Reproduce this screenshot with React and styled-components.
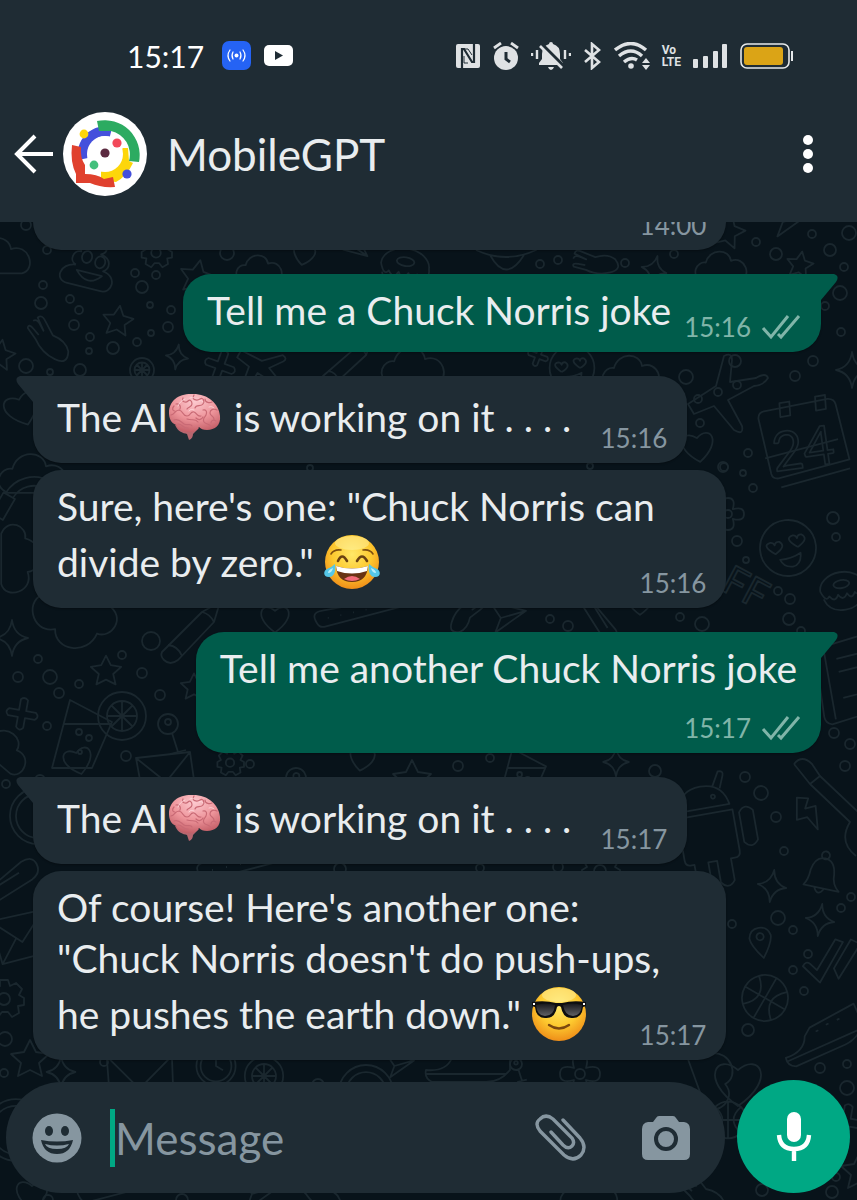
import React from 'react'
import styled, { createGlobalStyle } from 'styled-components'

const GlobalStyle = createGlobalStyle`
  * {
    box-sizing: border-box;
  }
  body {
    margin: 0;
    background: #08131a;
    font-family: Lato, "Open Sans", sans-serif;
  }
`

const messages = [
  { id: 1, side: 'in', time: '14:00', wide: true, stacked: true, text: [] },
  { id: 2, side: 'out', time: '15:16', tail: true, gap: 24, text: ['Tell me a Chuck Norris joke'] },
  { id: 3, side: 'in', time: '15:16', tail: true, gap: 24, text: ['The AI', 'brain', ' is working on it . . . .'] },
  { id: 4, side: 'in', time: '15:16', gap: 7, text: ['Sure, here\'s one: "Chuck Norris can divide by zero." ', 'joy'] },
  { id: 5, side: 'out', time: '15:17', tail: true, gap: 24, stacked: true, text: ['Tell me another Chuck Norris joke'] },
  { id: 6, side: 'in', time: '15:17', tail: true, gap: 24, text: ['The AI', 'brain', ' is working on it . . . .'] },
  { id: 7, side: 'in', time: '15:17', gap: 7, text: ['Of course! Here\'s another one:\n"Chuck Norris doesn\'t do push-ups, he pushes the earth down." ', 'cool'] },
]

const emojiNames = ['brain', 'joy', 'cool']

// wallpaper shapes, each drawn round 0,0 and about 40 units wide
const shapes = {
  star: 'M0-18 6-6 19-4 9 5 12 18 0 12-12 18-9 5-19-4-6-6Z',
  sparkle: 'M0-18Q2-3 16 0Q2 3 0 18Q-2 3-16 0Q-2-3 0-18Z',
  heart: 'M0 16C-26-2-14-20 0-8C14-20 26-2 0 16Z',
  cloud: 'M-22 14C-36 8-28-8-18-6C-14-22 8-22 10-8C26-14 34 10 20 14Z',
  gear: 'M-4-18h8l2 6 6-3 6 6-3 6 5 3v7l-6 1 1 7-7 4-4-5h-6l-4 5-7-4 1-7-6-1v-7l5-3-3-6 6-6 6 3ZM-6 1a6 6 0 1 0 12 0a6 6 0 1 0-12 0',
  hand: 'M-20-16q4-3 8 3l4 5-8-12q4-4 8 2l10 13Q16-2 20 8q2 14-12 10Q-6 14-14 2L-24-8q0-5 6 0l6 5',
  poop: 'M-14 2c-8-2-6-14 2-14-4-14 8-12 12-20 12 4 16 14 8 18 12 2 12 12 6 16 16 2 14 20 2 20h-34c-14 0-12-18 4-20M-10-8a5 6 0 1 0 10 0a5 6 0 1 0-10 0M4-6a5 6 0 1 0 10 0a5 6 0 1 0-10 0M-12 7Q2 22 14 7Z',
  donut: 'M-22 0a22 16 0 1 1 44 0q2 8-4 8t-6-2q-4 8-8 0-5 8-9 0-4 8-9 0-4 6-8-6ZM-8-4a8 4 0 1 0 16 0a8 4 0 1 0-16 0M-20 8q4 14 20 14t20-14',
  ufo: 'M-30 0Q0-14 30 0Q0 14-30 0M-16 5Q0 34 18 5',
  plane: 'M-20-18 20-8-14 16-8 0ZM-8 0 20-8',
  jet: 'M4-32q8-4 8 4l-2 22 26-4q10-6 12 0-4 7-14 8l-26 14 14 26q2 10-8 4L-6 18l-20 8-6-10 28-18Z',
  calendar: 'M-38-24q0-6 6-7l64-8q7 0 8 6l10 56-72 14q-6 0-7-5ZM-34 16 40 2M-16-38l10-1v14l-10 1ZM20-42l10-1v14l-10 1ZM-20 46 50 32',
  face: 'M-28 0a28 28 0 1 0 56 0a28 28 0 1 0-56 0M-13 5q-14-10-4-12 3 0 4 3 1-4 5-3 7 5-5 12M10 0q-14-10-4-12 3 0 4 3 1-4 5-3 7 5-5 12M-9 11q12 0 21-5 0 12-9 13-9 0-12-8Z',
  pencil: 'M-28 12 12-28 30-38 24-18-12 20q-8 6-14 0-4-4-2-8ZM12-28Q20-26 24-18M-22 5Q-12 6-8 16',
  glass: 'M-22-24-40 44H0L20-2ZM-28 0H20M-16 8a3 3 0 1 0 6 0a3 3 0 1 0-6 0M-6 14a3 3 0 1 0 6 0a3 3 0 1 0-6 0M-14 28a2 2 0 1 0 4 0a2 2 0 1 0-4 0',
  citrus: 'M-24 0a24 24 0 1 0 48 0a24 24 0 1 0-48 0M-15 0a15 15 0 1 0 30 0a15 15 0 1 0-30 0M0-15V15M-15 0H15M-10-10 10 10M10-10-10 10',
  plus: 'M-4-16q4-4 8 0v12h11q5 4 0 8H4v11q-4 5-8 0V4h-11q-5-4 0-8h11Z',
  bell: 'M-16 14Q-12 8-12-2Q-10-16 0-16Q10-16 12-2Q12 8 20 14ZM-5 14q5 10 10 0M-4-19a4 4 0 1 0 8 0a4 4 0 1 0-8 0',
  android: 'M-26-24Q-22-46 0-46Q22-46 26-24ZM-28-18H28V24q0 6-6 6h-4v22q-7 9-14 0V30H-5v22q-7 9-14 0V30h-4q-5 0-5-6ZM34-14q7-9 14 0v30q-7 9-14 0ZM12-44l8-14q6 0 4 5l-5 12M9-34a2 2 0 1 0 4 0a2 2 0 1 0-4 0',
  bolt: 'M-6-18 6-14 0-4 12-4 8 22 0 6-12 6Z',
  pin: 'M0 18Q-12 2-12-6Q-10-16 0-16Q10-16 12-6Q12 2 0 18ZM-4-6a4 4 0 1 0 8 0a4 4 0 1 0-8 0',
  ball: 'M-23 0a23 23 0 1 0 46 0a23 23 0 1 0-46 0M-23 0H23M0-23V23M-16-16Q2 0-16 16M16-16Q-2 0 16 16',
  check: 'M-26 2q4-6 8-2l7 8 24-32 8 4-30 42ZM8 8 30-22 40-16 12 20Z',
  shoe: 'M-44 0q20 2 26-12l8-6 50-4V0q-10 12-24 12h-54q-8-4-6-12ZM-44 4H36M-6-12h3M6-14h3M18-14h3',
  guitar: 'M-36-36q8-10 18 0l8 12L28 12q20-4 28 14M-10-24-20-16-36-36M-20-16 20 22q-12 20 6 34',
  notebook: 'M-20-30 30-36V34L-16 40q-6-2-6-8ZM-12-30V36M-2-18 26-20M-2-6 26-8M-2 18 26 16',
  envelope: 'M-30-20 24-26 30 16-22 24ZM-30-20 0 4 24-26M-22 24-6 0',
  clip: 'M-26 10 12-22q10-6 14 2t-4 14L-16 18q-6 4-9-1t3-9L10-12',
  clock: 'M-28 0a28 28 0 1 0 56 0a28 28 0 1 0-56 0M-22 0a22 22 0 1 0 44 0a22 22 0 1 0-44 0M0-14V0L10 6',
  flower: 'M-6-6Q-10-20 0-20T6-6Q20-10 20 0T6 6Q10 20 0 20T-6 6Q-20 10-20 0T-6-6ZM-5 0a5 5 0 1 0 10 0a5 5 0 1 0-10 0',
  headset: 'M-30 0A30 30 0 0 1 30 0M-22 0A22 22 0 0 1 22 0M-32 0h12v22h-12ZM20 0h12v22H20Z',
  lolly: 'M-10 0a10 10 0 1 0 20 0a10 10 0 1 0-20 0M-3-2a3 3 0 1 0 6 0a3 3 0 1 0-6 0M4 9 10 28M2 30 18 26',
  flute: 'M-50 8q-8-12 6-14L44-22q10 0 6 10L-42 12q-5 1-8-4ZM-38 2h1M-24-1h1M-10-4h1M4-7h1',
}

const doodles = [
  ['cloud', 0, 258, 1.1, 0], ['poop', 90, 266, 1, 14], ['gear', 156, 252, 0.8, 0], ['star', 197, 276, 0.9, 12], ['cloud', 260, 270, 0.8, 0],
  ['heart', 304, 254, 0.7, 12], ['plane', 356, 250, 0.6, 50], ['donut', 405, 266, 1.1, 8], ['ufo', 506, 250, 1, 0], ['hand', 596, 262, 0.9, -30],
  ['sparkle', 654, 270, 0.8, 14], ['star', 728, 230, 0.9, 14], ['plane', 790, 222, 0.9, 0], ['cloud', 722, 268, 0.9, 0], ['star', 800, 264, 0.7, 10],
  ['star', 118, 320, 0.8, 8], ['hand', 50, 340, 1, 10], ['star', 0, 354, 0.8, 10], ['sparkle', 177, 357, 0.7, 8], ['citrus', 142, 370, 0.5, 0],
  ['plus', 220, 366, 0.9, 20], ['jet', 262, 364, 0.7, 60], ['pencil', 346, 368, 0.8, 4], ['cloud', 414, 368, 1.1, 0], ['plus', 538, 356, 0.6, 20],
  ['face', 572, 368, 0.8, 0], ['cloud', 632, 374, 1, 0], ['jet', 720, 388, 1, 0], ['sparkle', 852, 370, 1, 0], ['heart', 22, 408, 1.1, -20],
  ['heart', 698, 446, 1, -8], ['calendar', 798, 440, 1, -4], ['flower', 728, 514, 0.8, 0], ['face', 788, 548, 1, -6], ['donut', 842, 588, 1, -10],
  ['cloud', 34, 476, 1.2, 0], ['headset', 34, 510, 1.1, 30], ['cloud', 18, 560, 1.2, 90], ['cloud', 72, 620, 1.5, 190], ['sparkle', 12, 638, 1, 0],
  ['heart', 275, 618, 0.9, 0], ['pencil', 190, 640, 1, 0], ['flute', 362, 616, 0.9, 0], ['hand', 466, 616, 0.8, 90], ['plane', 508, 618, 0.9, 0],
  ['clip', 598, 620, 0.8, 90], ['heart', 640, 602, 0.8, 0], ['star', 106, 670, 0.8, 0], ['star', 194, 686, 0.7, 0], ['glass', 92, 724, 1, 0],
  ['citrus', 122, 716, 1, 0], ['plus', 22, 714, 0.9, 10], ['lolly', 168, 724, 1, 0], ['cloud', 4, 750, 1, 40], ['notebook', 842, 678, 1.1, -10],
  ['heart', 78, 760, 0.9, -14], ['envelope', 166, 778, 1, 0], ['gear', 230, 762, 0.7, 0], ['lolly', 296, 778, 1, 10], ['heart', 362, 758, 0.8, 10],
  ['star', 412, 778, 1, 0], ['glass', 530, 768, 0.8, 0], ['sparkle', 616, 762, 0.8, 0], ['clock', 38, 816, 1, 0], ['android', 708, 832, 1, -10],
  ['guitar', 830, 800, 1, 0], ['bolt', 806, 812, 0.9, -14], ['bell', 822, 874, 1, 12], ['sparkle', 772, 886, 0.9, 8], ['sparkle', 820, 920, 0.9, 8],
  ['clip', 8, 886, 1.1, 0], ['envelope', 22, 938, 1, -6], ['pin', 761, 942, 0.9, -10], ['ball', 765, 998, 1, 30], ['check', 826, 962, 0.9, -6],
  ['shoe', 826, 1040, 1, -24], ['gear', 4, 998, 1, 0], ['star', 30, 1058, 1, 0], ['sparkle', 61, 1072, 0.9, 0], ['envelope', 140, 1084, 1.2, 6],
  ['clock', 216, 1066, 0.7, 0], ['citrus', 264, 1076, 0.8, 0], ['plane', 400, 1066, 0.7, 0], ['headset', 366, 1092, 0.9, 0], ['shoe', 470, 1070, 1, 0],
  ['lolly', 516, 1064, 0.6, 0], ['flower', 580, 1074, 1, 0], ['cloud', 712, 1076, 1.2, 70], ['heart', 738, 1082, 1.5, 0], ['ball', 728, 1120, 0.8, 0],
  ['clock', 16, 1130, 1.1, 0], ['heart', 32, 1194, 1, 0], ['flute', 130, 1190, 1, 0], ['plane', 260, 1194, 1, 0], ['hand', 320, 1192, 1, 0],
  ['cloud', 590, 1196, 1, 0], ['hand', 704, 1194, 1, 0], ['plus', 846, 1122, 1, 10], ['star', 860, 1170, 1, 0], ['flute', 250, 868, 1, 0], ['gear', 600, 870, 1, 0],
]

const circles = [
  [26, 225, 5], [47, 250, 4], [227, 253, 7], [135, 273, 4], [156, 275, 4], [142, 287, 6], [43, 285, 4], [41, 303, 6], [70, 299, 4], [79, 310, 4],
  [74, 325, 5], [90, 337, 4], [89, 351, 3], [113, 348, 6], [137, 342, 4], [151, 333, 3], [150, 305, 3], [171, 310, 4], [168, 327, 5], [26, 366, 7],
  [50, 372, 3], [80, 370, 6], [540, 264, 4], [558, 260, 4], [625, 263, 4], [674, 254, 4], [756, 242, 4], [776, 254, 6], [812, 234, 4], [830, 250, 6],
  [844, 267, 4], [849, 233, 7], [840, 293, 7], [825, 306, 4], [841, 332, 4], [686, 377, 7], [735, 361, 6], [795, 376, 5], [813, 361, 5], [698, 399, 4],
  [718, 392, 4], [737, 385, 4], [700, 423, 4], [748, 453, 4], [724, 467, 4], [743, 473, 3], [753, 488, 4], [833, 518, 6], [836, 537, 4], [737, 541, 5],
  [746, 560, 3], [778, 591, 4], [790, 599, 5], [789, 619, 6], [801, 631, 4], [680, 617, 4], [702, 624, 7], [550, 619, 4], [568, 626, 5], [151, 641, 9],
  [38, 659, 4], [18, 677, 5], [50, 677, 7], [59, 693, 5], [79, 684, 4], [122, 655, 4], [142, 673, 5], [160, 695, 5], [47, 726, 4], [126, 756, 5],
  [834, 733, 5], [850, 744, 5], [6, 784, 4], [40, 780, 5], [458, 766, 5], [655, 771, 6], [745, 777, 5], [761, 793, 7], [776, 817, 5], [784, 851, 4],
  [841, 908, 4], [851, 897, 4], [732, 924, 4], [778, 918, 7], [793, 930, 4], [808, 954, 4], [793, 970, 4], [804, 991, 4], [748, 1030, 6], [820, 1068, 5],
  [847, 1064, 4], [847, 1088, 7], [5, 1039, 7], [4, 1073, 4], [104, 1062, 4], [762, 1190, 6], [832, 1192, 6], [836, 1177, 4], [182, 1200, 6], [48, 1200, 5],
  [845, 766, 5], [318, 1085, 6], [340, 869, 6], [480, 868, 4], [558, 867, 5], [310, 468, 3], [590, 466, 3], [723, 467, 5], [250, 764, 4], [490, 758, 4],
]

function Wallpaper() {
  return (
    <WallpaperSvg viewBox="0 222 857 978" preserveAspectRatio="xMinYMin slice" aria-hidden="true">
      {doodles.map(([name, x, y, s, r], i) => (
        <path key={i} d={shapes[name]} transform={`translate(${x} ${y}) rotate(${r}) scale(${s})`} vectorEffect="non-scaling-stroke" />
      ))}
      {circles.map(([x, y, r], i) => <circle key={i} cx={x} cy={y} r={r} />)}
      <text x="772" y="468" fontSize="54" transform="rotate(-8 800 450)">24</text>
      <text x="716" y="598" fontSize="40" transform="rotate(28 735 600)">FF</text>
    </WallpaperSvg>
  )
}

function Emoji({ name }) {
  if (name === 'brain') {
    return (
      <EmojiSvg viewBox="0 0 56 56" role="img" aria-label="brain">
        <defs>
          <radialGradient id="brainFill" cx="50%" cy="20%" r="80%">
            <stop offset="0" stopColor="#fcc9cf" />
            <stop offset=".55" stopColor="#ee959b" />
            <stop offset="1" stopColor="#c45f68" />
          </radialGradient>
        </defs>
        <path fill="#b9666f" d="M7 36c3 7 8 8 12 9l2 6c3-1 4-4 4-6l6-6Z" />
        <path fill="url(#brainFill)" d="M1 24C1 12 10 5 23 5c16-1 28 9 29 22 1 9-5 14-13 14-4 0-6-1-8-3-2 4-6 6-11 5-6 0-10-3-12-7-5-2-7-7-7-12Z" />
        <g fill="none" stroke="#c96a75" strokeWidth="1.2" strokeLinecap="round" transform="translate(-2 0)">
          <path d="M5 26c4-1 4-5 8-5 5 1 3 6 8 6 4 0 3-5 7-4 3 1 3 5 7 4M10 15c4-1 5 3 4 5M17 9c-2 4 3 5 5 3s4 0 4 3-4 3-5 5M28 6c-3 5 3 6 6 4s5 2 3 5-7 0-8 4M39 10c0 4 5 4 7 3M51 21c-4-2-7 0-7 3s4 3 4 6M37 21c4-1 4 3 3 5s-4 4-2 7 6 1 7 5M8 31c5-2 7 2 10 4s7-1 8 2M21 30c5 2 8-1 11 3M12 35c5 0 5 5 10 4M50 32c-3-2-5 0-5 2M9 22c-3 0-3-3-1-5M30 29c3 3 6 1 7-1" />
        </g>
        <path fill="none" stroke="#ffe3e5" strokeWidth="1" opacity=".7" strokeLinecap="round" d="M10 17c1-3 4-6 7-7M22 9c2-1 3-1 4 0M31 12c2-1 4 0 4 1M21 22c1-2 3-2 5-1M41 18c2-1 4 0 5 1" />
      </EmojiSvg>
    )
  }
  return (
    <EmojiSvg viewBox="0 0 56 56" role="img" aria-label={name === 'joy' ? 'tears of joy' : 'sunglasses'}>
      <defs>
        <radialGradient id={`face-${name}`} cx="50%" cy="36%" r="66%">
          <stop offset="0" stopColor="#ffe868" />
          <stop offset=".55" stopColor="#fdc92f" />
          <stop offset="1" stopColor="#ee8a17" />
        </radialGradient>
        <linearGradient id="lens" x1="0" y1="0" x2="0" y2="1">
          <stop offset="0" stopColor="#17181b" />
          <stop offset="1" stopColor="#606166" />
        </linearGradient>
      </defs>
      <circle cx="28" cy="28" r="27" fill={`url(#face-${name})`} />
      <ellipse cx="28" cy="9" rx="17" ry="7" fill="#fff7b0" opacity=".45" />
      {name === 'joy' ? (
        <g>
          <path fill="none" stroke="#80500f" strokeWidth="1.6" strokeLinecap="round" d="M7 20Q10 15 17 16M49 20Q46 15 39 16" />
          <path fill="none" stroke="#6a4211" strokeWidth="2.6" strokeLinecap="round" d="M14 27Q18 18 23 27M33 27Q38 18 43 27" />
          <path fill="#693313" d="M12 32Q28 37 44 32Q43 48 28 48Q13 48 12 32Z" />
          <path fill="#fff" d="M12 32Q28 37 44 32L43 37Q28 42 13 37Z" />
          <path fill="#f26b78" d="M20 45Q28 39 36 45Q28 49 20 45Z" />
          <path fill="#55c7e8" d="M11 30C12 38 10 43 5 43C-1 43-1 37 3 35Q8 33 11 30ZM45 30C44 38 46 43 51 43C57 43 57 37 53 35Q48 33 45 30Z" />
          <path fill="#b9effb" d="M9 34Q8 39 4 39Q4 36 9 34ZM47 34Q48 39 52 39Q52 36 47 34Z" />
        </g>
      ) : (
        <g>
          <path fill="#0d0e10" d="M1 16Q14 14 25 17H31Q42 14 55 16V20L52 21Q51 32 42 32Q32 33 30 21Q28 19 26 21Q24 33 14 32Q5 32 4 21L1 20Z" />
          <path fill="url(#lens)" d="M5 19Q15 16 24 19Q23 30 14 30Q6 30 5 19ZM32 19Q41 16 51 19Q50 30 42 30Q34 30 32 19Z" />
          <path fill="#fff" d="M2 17h2v2H2ZM52 17h2v2h-2Z" />
          <path fill="none" stroke="#7c480f" strokeWidth="2.4" strokeLinecap="round" d="M18 39Q28 46 38 39" />
        </g>
      )}
    </EmojiSvg>
  )
}

function StatusIcons() {
  return (
    <StatusGroup $gap={12}>
      <svg width="26" height="26" viewBox="0 0 26 26">
        <rect x="1" y="1" width="24" height="24" rx="2" fill="#dfe2e4" />
        <path d="M7 25V6H9L17 19H19V1" fill="none" stroke="#1f2c34" strokeWidth="2.2" />
        <path d="M9 6 13 6 17 12M9 13V20H13" fill="none" stroke="#1f2c34" strokeWidth="1" />
      </svg>
      <svg width="26" height="28" viewBox="0 0 26 28">
        <circle cx="13" cy="16" r="12" fill="#dfe2e4" />
        <path d="M1 6 8 1M25 6 18 1" stroke="#dfe2e4" strokeWidth="2.8" />
        <path d="M13 10V17L17 20" fill="none" stroke="#1f2c34" strokeWidth="3" />
      </svg>
      <svg width="40" height="28" viewBox="0 0 40 28">
        <path fill="#dfe2e4" d="M18 2Q18 0 20 0T22 2Q29 4 29 12V17L32 21V23H8V21L11 17V12Q11 4 18 2ZM17 25H23Q22 28 20 28T17 25Z" />
        <path d="M11 3 33 25" stroke="#1f2c34" strokeWidth="4" />
        <path d="M9 4 31 26" stroke="#dfe2e4" strokeWidth="2.6" />
        <path d="M1 11V14M6 8V17M34 8V17M39 11V14" stroke="#dfe2e4" strokeWidth="2.4" />
      </svg>
      <svg width="19" height="28" viewBox="0 0 19 28">
        <path d="M2 8 16 20 9 26V2L16 8 2 20" fill="none" stroke="#dfe2e4" strokeWidth="2.6" />
      </svg>
      <svg width="36" height="28" viewBox="0 0 36 28">
        <g fill="none" stroke="#dfe2e4" strokeWidth="3.4">
          <path d="M1 8Q17-5 32 8M5 14Q17 4 28 14M10 20Q17 14 23 18" />
        </g>
        <circle cx="17" cy="24" r="2.8" fill="#dfe2e4" />
        <path fill="#dfe2e4" d="M28 21 32 16 36 21ZM28 23H36L32 28Z" />
      </svg>
      <Volte><span>Vo</span><span>LTE</span></Volte>
      <svg width="35" height="26" viewBox="0 0 35 26" fill="#dfe2e4">
        <rect x="0" y="16" width="5" height="9" rx="1" />
        <rect x="10" y="13" width="5" height="12" rx="1" />
        <rect x="20" y="8" width="5" height="17" rx="1" />
        <rect x="29" y="1" width="5" height="24" rx="1" />
      </svg>
      <svg width="54" height="26" viewBox="0 0 54 26">
        <rect x="1" y="1" width="48" height="24" rx="6" fill="none" stroke="#e6e9ea" strokeWidth="1.6" />
        <rect x="4" y="4" width="39" height="18" rx="3" fill="#dba416" />
        <path d="M52 8V18" stroke="#e6e9ea" strokeWidth="2" />
      </svg>
    </StatusGroup>
  )
}

function Avatar() {
  return (
    <svg width="84" height="84" viewBox="0 0 84 84" role="img" aria-label="MobileGPT avatar">
      <circle cx="42" cy="42" r="42" fill="#fff" />
      <path d="M20 47A23 23 0 0 1 48 20" fill="none" stroke="#4450dc" strokeWidth="10" />
      <path d="M60 36H65L66 49L70 51Q64 64 53 70Q46 70 38 67V58Z" fill="#fdd60a" />
      <path d="M34 9A35 35 0 0 1 76 50L66 49A24 24 0 0 0 48 19L36 19Z" fill="#2cab61" />
      <path d="M9 33 18 35Q17 46 22 53V62Q34 62 41 67L50 65 52 75Q38 76 27 71L13 71V62Q7 50 9 33Z" fill="#e0412e" />
      <circle cx="42" cy="42" r="18" fill="#fff" />
      <circle cx="21" cy="22" r="4.4" fill="#fdd60a" />
      <circle cx="54" cy="31" r="4.6" fill="#f2495a" />
      <circle cx="42" cy="41" r="4.6" fill="#5c2a40" />
      <circle cx="31" cy="53" r="4.4" fill="#44c07c" />
      <circle cx="64" cy="62" r="4.6" fill="#4450dc" />
    </svg>
  )
}

function Message({ side, time, tail, gap, stacked, wide, text }) {
  const out = side === 'out'
  return (
    <Bubble $out={out} $tail={tail} $gap={gap} $wide={wide}>
      {tail && (
        <Tail $out={out} viewBox="0 0 18 27" aria-hidden="true">
          <path d="M0 0H14Q20 2 16 8L1 26V27H0Z" />
        </Tail>
      )}
      <BubbleText>
        {text.map((part) => emojiNames.includes(part) ? <Emoji key={part} name={part} /> : part)}
        {!stacked && <Spacer $out={out} />}
      </BubbleText>
      <Meta $out={out} $stacked={stacked}>
        <time>{time}</time>
        {out && (
          <svg width="40" height="26" viewBox="0 0 40 26" fill="none" stroke="#80b5a9" strokeWidth="3" role="img" aria-label="Delivered">
            <path d="M2 14 10 23 27 2M17 20 20 23 38 2" />
          </svg>
        )}
      </Meta>
    </Bubble>
  )
}

function App() {
  return (
    <Phone>
      <GlobalStyle />
      <Header>
        <StatusBar>
          <StatusGroup $gap={13}>
            <Clock>15:17</Clock>
            <svg width="29" height="29" viewBox="0 0 29 29">
              <rect width="29" height="29" rx="7" fill="#2563f4" />
              <circle cx="14.5" cy="14.5" r="2" fill="#fff" />
              <path d="M11 11Q9 14.5 11 18M18 11Q20 14.5 18 18M8 9Q4 14.5 8 20M21 9Q25 14.5 21 20" fill="none" stroke="#fff" strokeWidth="1.2" strokeLinecap="round" />
            </svg>
            <svg width="29" height="21" viewBox="0 0 29 21">
              <rect width="29" height="21" rx="5" fill="#fff" />
              <path d="M11 6 19 10.5 11 15Z" fill="#1f2c34" />
            </svg>
          </StatusGroup>
          <StatusIcons />
        </StatusBar>
        <AppBar>
          <IconButton aria-label="Back">
            <svg width="40" height="40" viewBox="0 0 40 40" fill="none" stroke="#fff" strokeWidth="4">
              <path d="M39 20H4M21 2 3 20 21 38" />
            </svg>
          </IconButton>
          <Avatar />
          <Title>MobileGPT</Title>
          <IconButton aria-label="More options">
            <svg width="12" height="40" viewBox="0 0 12 40" fill="#fff">
              <circle cx="6" cy="6" r="5" />
              <circle cx="6" cy="20" r="5" />
              <circle cx="6" cy="34" r="5" />
            </svg>
          </IconButton>
        </AppBar>
      </Header>

      <Conversation>
        <Wallpaper />
        <MessageList>
          {messages.map((m) => <Message key={m.id} {...m} />)}
        </MessageList>
        <Composer>
          <Field>
            <IconButton type="button" aria-label="Emoji">
              <svg width="50" height="50" viewBox="0 0 50 50">
                <circle cx="25" cy="25" r="24.5" fill="#8696a0" />
                <ellipse cx="17" cy="18" rx="4" ry="5" fill="#1f2c34" />
                <ellipse cx="33" cy="18" rx="4" ry="5" fill="#1f2c34" />
                <path d="M9 27Q25 30 41 27Q38 41 25 41T9 27Z" fill="#1f2c34" />
                <path d="M13 31Q25 34 37 31Q35 36 25 36T13 31Z" fill="#8696a0" />
              </svg>
            </IconButton>
            <MessageInput type="text" placeholder="Message" aria-label="Message" />
            <IconButton type="button" aria-label="Attach">
              <svg width="52" height="48" viewBox="0 0 52 48" fill="none" stroke="#8696a0" strokeWidth="3.4" strokeLinecap="round">
                <path d="M28 6 45 24C50 30 50 36 46 41C41 46 35 46 29 41L5 17C1 12 1 8 5 5C9 1 13 1 18 5L37 24C39 27 39 30 37 32C34 35 31 34 28 31L16 18" />
              </svg>
            </IconButton>
            <IconButton type="button" aria-label="Camera">
              <svg width="48" height="46" viewBox="0 0 48 46">
                <path d="M17 1H31Q33 1 34 3L37 7H42Q48 8 48 14V39Q48 45 42 45H6Q0 45 0 39V14Q0 8 6 7H11L14 3Q15 1 17 1Z" fill="#8696a0" />
                <circle cx="24" cy="24" r="10" fill="none" stroke="#1f2c34" strokeWidth="4" />
              </svg>
            </IconButton>
          </Field>
          <MicButton type="button" aria-label="Record voice message">
            <svg width="36" height="50" viewBox="0 0 36 50">
              <rect x="11" y="0" width="14" height="30" rx="7" fill="#fff" />
              <path d="M3 23Q4 37 18 37T33 23M18 37V49" fill="none" stroke="#fff" strokeWidth="4.4" />
            </svg>
          </MicButton>
        </Composer>
      </Conversation>
    </Phone>
  )
}

const Phone = styled.div`
  display: flex;
  flex-direction: column;
  height: 100vh;
  overflow: hidden;
`

const Header = styled.header`
  flex: none;
  padding-bottom: 25px;
  background: #1f2c34;
`

const StatusBar = styled.div`
  display: flex;
  align-items: center;
  justify-content: space-between;
  height: 111px;
  padding: 0 63px 0 127px;
`

const StatusGroup = styled.div`
  display: flex;
  align-items: center;
  gap: ${(p) => p.$gap}px;
`

const Clock = styled.span`
  margin-right: 5px;
  color: #fff;
  font-size: 30px;
  line-height: 36px;
`

const Volte = styled.span`
  display: flex;
  flex-direction: column;
  color: #dfe2e4;
  font-family: "Liberation Sans Narrow", Roboto, sans-serif;
  font-size: 12px;
  font-weight: 700;
  line-height: 12px;
`

const AppBar = styled.div`
  display: flex;
  align-items: center;
  height: 86px;
  padding: 0 43px 0 14px;
  gap: 9px;
`

const Title = styled.h1`
  flex: 1;
  margin: 0 0 0 11px;
  color: #e9edef;
  font-size: 44px;
  font-weight: 400;
  line-height: 52px;
`

const IconButton = styled.button`
  display: flex;
  flex: none;
  padding: 0;
  border: 0;
  background: none;
`

const Conversation = styled.main`
  position: relative;
  display: flex;
  flex: 1;
  flex-direction: column;
  min-height: 0;
  overflow: hidden;
`

const WallpaperSvg = styled.svg`
  position: absolute;
  inset: 0;
  width: 100%;
  height: 100%;
  fill: none;
  stroke: #1a272e;
  stroke-width: 1.8;
  stroke-linejoin: round;
`

const MessageList = styled.section`
  position: relative;
  display: flex;
  flex: 1;
  flex-direction: column;
  justify-content: flex-end;
  min-height: 0;
  padding: 0 36px 20px 33px;
  overflow: hidden;
`

const Bubble = styled.article`
  position: relative;
  display: grid;
  flex: none;
  align-self: ${(p) => (p.$out ? 'flex-end' : 'flex-start')};
  width: ${(p) => (p.$wide ? '100%' : 'auto')};
  max-width: 88%;
  margin-top: ${(p) => p.$gap || 0}px;
  padding: 11px 24px 16px;
  border-radius: 28px;
  ${(p) => p.$tail && (p.$out ? 'border-top-right-radius: 0;' : 'border-top-left-radius: 0;')}
  background: ${(p) => (p.$out ? '#005c4b' : '#1f2c34')};
  box-shadow: 0 1px 2px rgba(0, 0, 0, 0.3);
`

const Tail = styled.svg`
  position: absolute;
  top: 0;
  width: 18px;
  height: 27px;
  fill: ${(p) => (p.$out ? '#005c4b' : '#1f2c34')};
  ${(p) => (p.$out ? 'left: calc(100% - 1px);' : 'right: calc(100% - 1px); transform: scaleX(-1);')}
`

const BubbleText = styled.p`
  grid-area: 1 / 1;
  min-height: 51px;
  margin: 0;
  color: #e9edef;
  font-size: 39px;
  line-height: 51px;
  white-space: pre-line;
`

const EmojiSvg = styled.svg`
  width: 56px;
  height: 56px;
  margin: 2px 0;
  vertical-align: -15px;
`

const Spacer = styled.span`
  display: inline-block;
  width: ${(p) => (p.$out ? 126 : 92)}px;
`

const Meta = styled.div`
  display: flex;
  grid-area: ${(p) => (p.$stacked ? '2 / 1' : '1 / 1')};
  align-items: center;
  align-self: end;
  justify-self: end;
  gap: 10px;
  margin: 0 -4px -8px 0;
  padding-top: ${(p) => (p.$stacked ? 17 : 0)}px;
  color: ${(p) => (p.$out ? '#80b5a9' : '#8696a0')};
  font-size: 26px;
  line-height: 34px;
`

const Composer = styled.form`
  position: relative;
  display: flex;
  flex: none;
  align-items: flex-end;
  gap: 12px;
  padding: 0 7px 7px 6px;
`

const Field = styled.div`
  display: flex;
  flex: 1;
  align-items: center;
  min-width: 0;
  height: 111px;
  padding: 0 35px 0 26px;
  border-radius: 56px;
  background: #1f2c34;
`

const MessageInput = styled.input`
  flex: 1;
  min-width: 0;
  height: 58px;
  margin: 0 28px;
  padding: 0;
  border: 0;
  border-left: 5px solid #00a884;
  outline: 0;
  background: none;
  color: #e9edef;
  font-family: inherit;
  font-size: 44px;
  &::placeholder {
    color: #8696a0;
    opacity: 1;
  }
  & + button {
    margin-right: 55px;
  }
`

const MicButton = styled.button`
  display: flex;
  flex: none;
  align-items: center;
  justify-content: center;
  width: 113px;
  height: 113px;
  padding: 0;
  border: 0;
  border-radius: 50%;
  background: #00a884;
`

export default App
